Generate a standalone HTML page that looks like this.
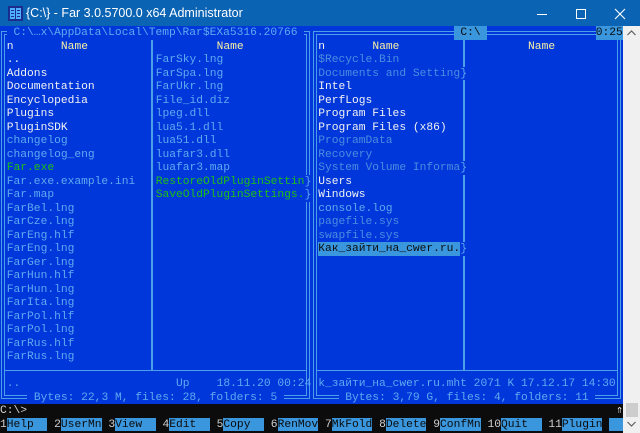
<!DOCTYPE html>
<html><head><meta charset="utf-8"><style>
*{margin:0;padding:0;box-sizing:border-box}
body{width:640px;height:433px;overflow:hidden;background:#0c0c0c;position:relative;font-family:"Liberation Mono","DejaVu Sans Mono",monospace}
#tb{position:absolute;left:0;top:0;width:640px;height:26px;background:#0b63b4;color:#fff;font:12.5px "Liberation Sans",sans-serif}
#con{position:absolute;left:0;top:26px;width:623px;height:378px;background:#0037da}
.r{position:absolute;white-space:pre;font-size:11.28px;line-height:13.5px;height:13.5px;color:#5eaaf0;padding-top:1px}
.fr{position:absolute;border:4px double #4aa0e8}
.w{color:#f2f2f2}.y{color:#f9f1a5}.g{color:#1cc014}.h{color:#4d8ce0}.c{color:#5eaaf0}.k{color:#d0d0d0}
.hl{background:#3a96dd;color:#0c0c0c}
.bb{background:#0037da}
#sb{position:absolute;left:623px;top:26px;width:17px;height:407px;background:#f0f0f0}
</style></head><body>
<div id="tb">
<svg style="position:absolute;left:8px;top:6px" width="15" height="15" viewBox="0 0 15 15"><rect x="0" y="0" width="15" height="15" fill="#1a2c8c"/><rect x="2" y="2" width="5" height="11" fill="#4fb0ff"/><rect x="8" y="2" width="5" height="11" fill="#4fb0ff"/><rect x="3" y="4" width="3" height="1" fill="#1a2c8c"/><rect x="9" y="4" width="3" height="1" fill="#1a2c8c"/><rect x="3" y="7" width="3" height="1" fill="#1a2c8c"/><rect x="9" y="7" width="3" height="1" fill="#1a2c8c"/><rect x="3" y="10" width="3" height="1" fill="#1a2c8c"/><rect x="9" y="10" width="3" height="1" fill="#1a2c8c"/></svg>
<div style="position:absolute;left:26px;top:6px">{C:\} - Far 3.0.5700.0 x64 Administrator</div>
<svg style="position:absolute;left:536px;top:8px" width="12" height="12"><line x1="1" y1="6.5" x2="11" y2="6.5" stroke="#fff"/></svg>
<svg style="position:absolute;left:575px;top:8px" width="12" height="12"><rect x="1.5" y="1.5" width="9" height="9" fill="none" stroke="#fff"/></svg>
<svg style="position:absolute;left:614px;top:8px" width="12" height="12"><path d="M1 1L11 11M11 1L1 11" stroke="#fff" stroke-width="1.1"/></svg>
</div>
<div id="con">
<div class="fr" style="left:1.4px;top:4.75px;width:308.6px;height:368.5px"></div>
<div class="fr" style="left:312.8px;top:4.75px;width:308.7px;height:368.5px"></div>
<div style="position:absolute;left:151.3px;top:13.5px;width:2px;height:331px;background:#4aa0e8"></div>
<div style="position:absolute;left:462.7px;top:13.5px;width:2px;height:331px;background:#4aa0e8"></div>
<div style="position:absolute;left:5.4px;top:344px;width:300.6px;height:1px;background:#4aa0e8"></div>
<div style="position:absolute;left:316.8px;top:344px;width:300.7px;height:1px;background:#4aa0e8"></div>
</div>
<div style="position:absolute;left:0;top:404px;width:623px;height:29px;background:#0c0c0c"></div>
<div id="txt"></div>
<div id="sb">
<svg style="position:absolute;left:4px;top:4px" width="9" height="6"><path d="M0.5 5L4.5 1L8.5 5" fill="none" stroke="#606060" stroke-width="1.2"/></svg>
<div style="position:absolute;left:3px;top:377px;width:12px;height:14px;background:#cdcdcd"></div>
<svg style="position:absolute;left:4px;top:395px" width="9" height="6"><path d="M0.5 1L4.5 5L8.5 1" fill="none" stroke="#606060" stroke-width="1.2"/></svg>
</div>
<script>
var W=6.77,H=13.5,T=26,o='';
function t(r,c,s,cl){o+='<div class="r '+(cl||'k')+'" style="left:'+(c*W).toFixed(2)+'px;top:'+(T+r*H)+'px">'+s+'</div>';}
t(0,1,' C:\\…x\\AppData\\Local\\Temp\\Rar$EXa5316.20766 ','c bb');
t(0,67,' C:\\ ','hl');t(0,88,'0:25','hl');
t(1,1,'n','w');t(1,9,'Name','y');t(1,32,'Name','y');
t(1,47,'n','w');t(1,55,'Name','y');t(1,78,'Name','y');
var L=[['..','w'],['Addons','w'],['Documentation','w'],['Encyclopedia','w'],['Plugins','w'],['PluginSDK','w'],['changelog','c'],['changelog_eng','c'],['Far.exe','g'],['Far.exe.example.ini','c'],['Far.map','c'],['FarBel.lng','c'],['FarCze.lng','c'],['FarEng.hlf','c'],['FarEng.lng','c'],['FarGer.lng','c'],['FarHun.hlf','c'],['FarHun.lng','c'],['FarIta.lng','c'],['FarPol.hlf','c'],['FarPol.lng','c'],['FarRus.hlf','c'],['FarRus.lng','c']];
L.forEach(function(e,i){t(2+i,1,e[0],e[1]);});
var L2=[['FarSky.lng','c'],['FarSpa.lng','c'],['FarUkr.lng','c'],['File_id.diz','c'],['lpeg.dll','c'],['lua5.1.dll','c'],['lua51.dll','c'],['luafar3.dll','c'],['luafar3.map','c'],['RestoreOldPluginSettin','g'],['SaveOldPluginSettings.','g']];
L2.forEach(function(e,i){t(2+i,23,e[0],e[1]);});
t(11,45,'}','c bb');t(12,45,'}','c bb');
var R=[['$Recycle.Bin','h'],['Documents and Setting','h'],['Intel','w'],['PerfLogs','w'],['Program Files','w'],['Program Files (x86)','w'],['ProgramData','h'],['Recovery','h'],['System Volume Informa','h'],['Users','w'],['Windows','w'],['console.log','c'],['pagefile.sys','h'],['swapfile.sys','h']];
R.forEach(function(e,i){t(2+i,47,e[0],e[1]);});
t(3,68,'}','c bb');t(10,68,'}','c bb');
t(16,47,'Как_зайти_на_cwer.ru.','hl');t(16,68,'}','c bb');
t(26,1,'..','c');t(26,26,'Up    18.11.20 00:24','c');
t(26,47,'k_зайти_на_cwer.ru.mht 2071 K 17.12.17 14:30','c');
t(27,4,' Bytes: 22,3 M, files: 28, folders: 5 ','c bb');
t(27,50,' Bytes: 3,79 G, files: 4, folders: 11 ','c bb');
t(28,0,'C:\\>','k');
t(28,91,'⇑','w');
var K=[[0,'1','Help  '],[8,'2','UserMn'],[16,'3','View  '],[24,'4','Edit  '],[32,'5','Copy  '],[40,'6','RenMov'],[48,'7','MkFold'],[56,'8','Delete'],[64,'9','ConfMn'],[72,'10','Quit  '],[81,'11','Plugin']];
K.forEach(function(k){t(29,k[0],k[1],'k');t(29,k[0]+k[1].length,k[2],'hl');});
t(29,90,'  ','hl');
document.getElementById('txt').innerHTML=o;
</script>
</body></html>
